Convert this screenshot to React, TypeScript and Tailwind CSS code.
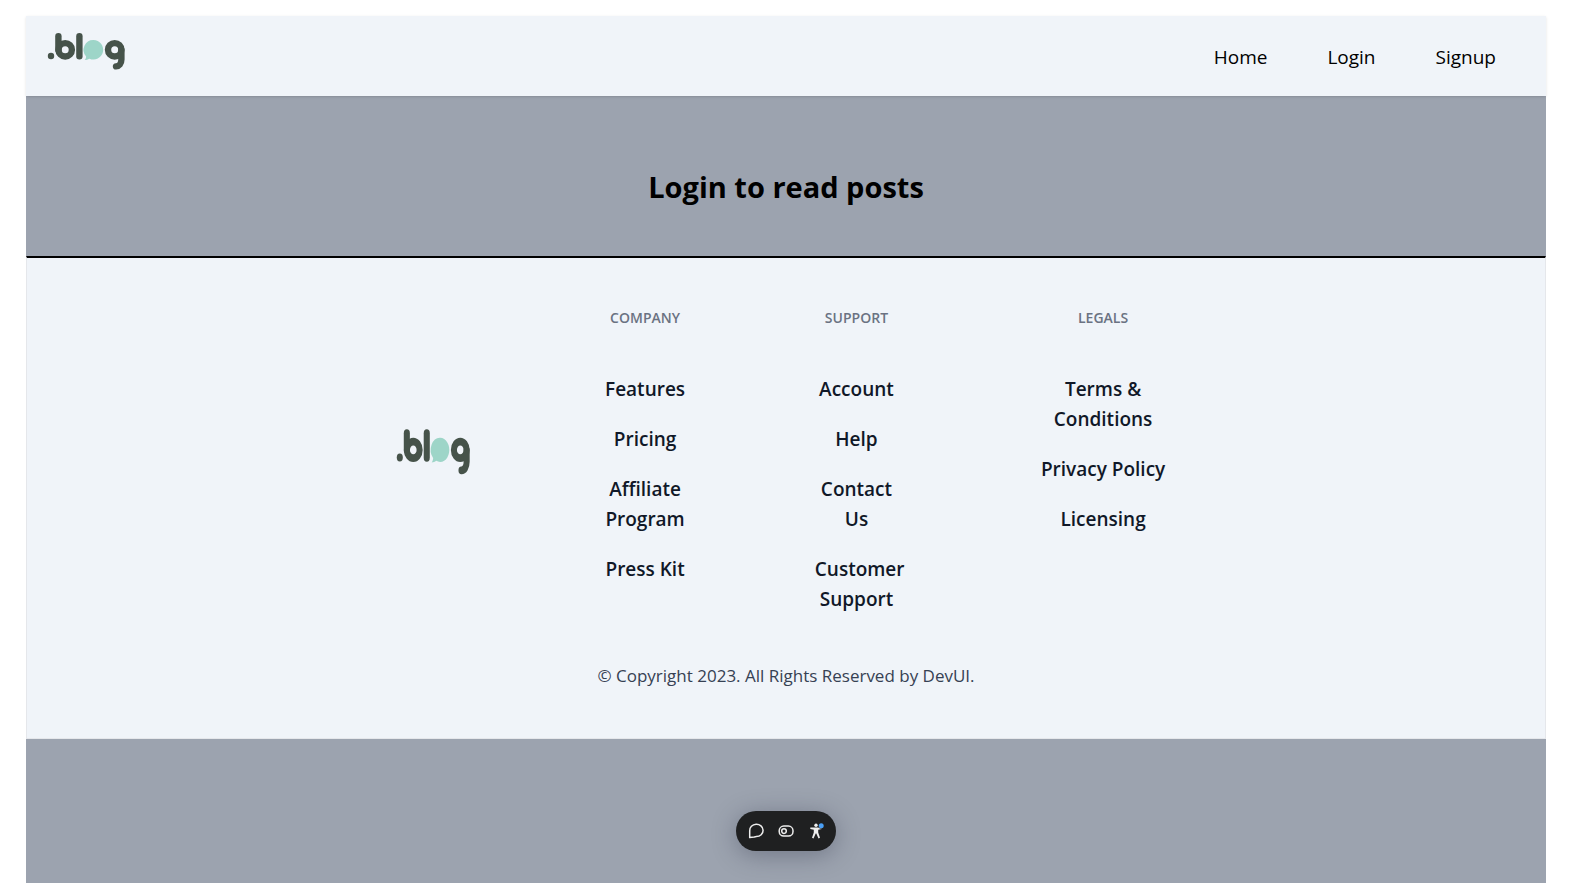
import type { ReactNode } from "react";

type LinkGroup = { title: string; links: string[] };

const navItems = ["Home", "Login", "Signup"];

const linkGroups: LinkGroup[] = [
  { title: "Company", links: ["Features", "Pricing", "Affiliate Program", "Press Kit"] },
  { title: "Support", links: ["Account", "Help", "Contact Us", "Customer Support"] },
  { title: "Legals", links: ["Terms & Conditions", "Privacy Policy", "Licensing"] },
];

function Logo({ className }: { className: string }) {
  return (
    <svg className={className} viewBox="47 32 79 39" preserveAspectRatio="none" role="img" aria-label=".blog">
      <circle cx="51" cy="56" r="3.2" fill="#46534a" />
      <g fill="none" stroke="#46534a" strokeWidth="6.4" strokeLinecap="round">
        <circle cx="65.2" cy="49.8" r="6.7" />
        <path d="M58.4 36.2V50" />
        <path d="M79.4 36.2V56.2" />
        <circle cx="114.7" cy="49.8" r="6.7" />
        <path d="M121.4 50V59.5C121.4 63.6 119 66.3 116 66.4" />
      </g>
      <path
        d="M93.6 40a9.7 9.8 0 1 1-4.2 18.7C87.9 59.6 86.3 60 84.6 60c1-1.1 1.5-2.2 1.5-3.6A9.7 9.8 0 0 1 93.6 40Z"
        fill="#9dd5c8"
      />
    </svg>
  );
}

function ToolButton({ label, children }: { label: string; children: ReactNode }) {
  return (
    <button type="button" aria-label={label} className="flex h-8 w-[30px] items-center justify-center">
      <svg className="size-4" viewBox="0 0 16 16" fill="none" stroke="#ededed" strokeWidth="1.5">
        {children}
      </svg>
    </button>
  );
}

function Toolbar() {
  return (
    <div className="pointer-events-none fixed inset-x-0 bottom-8 flex justify-center pr-2.5">
      <div className="pointer-events-auto flex h-10 items-center rounded-full bg-[#1f2021] px-[5px] shadow-[0_4px_24px_rgba(50,55,75,0.4)]">
        <ToolButton label="Comment">
          <path d="M1.7 14.6V7.8A6.7 6.2 0 1 1 8.4 13.6C7.6 13.6 6.9 13.8 6 14Z" strokeLinejoin="round" />
        </ToolButton>
        <ToolButton label="Feature flags">
          <rect x="1.2" y="3.1" width="13.8" height="10" rx="4.6" />
          <circle cx="6" cy="8.1" r="2.3" />
        </ToolButton>
        <ToolButton label="Accessibility">
          <circle cx="8" cy="2.2" r="1.7" fill="#ededed" stroke="none" />
          <path
            d="M2.3 4.6H13.7V6.1L10.2 6.8V9.5L12 14.8L10.5 15.4L8.3 10.5H7.7L5.5 15.4L4 14.8L5.8 9.5V6.8L2.3 6.1Z"
            fill="#ededed"
            stroke="none"
          />
          <circle cx="13.2" cy="2.8" r="3" fill="#1f2021" stroke="none" />
          <circle cx="13.2" cy="2.8" r="2.5" fill="#4a9ff5" stroke="none" />
        </ToolButton>
      </div>
    </div>
  );
}

export default function App() {
  return (
    <div className="flex min-h-screen flex-col bg-white pt-4 pr-9 pl-[26px] font-['Segoe_UI','Open_Sans',sans-serif]">
      <div className="flex-1 bg-[#9ca3af]">
        <header className="flex h-20 items-start justify-between bg-[#f0f4f9] py-4 pr-[26px] pl-[21px] shadow">
          <a href="#home">
            <Logo className="h-[39px] w-[79px]" />
          </a>
          <nav className="flex gap-3 self-center">
            {navItems.map((item) => (
              <a key={item} href={`#${item.toLowerCase()}`} className="px-6 pt-0.5 text-[19px] leading-[30px] text-black">
                {item}
              </a>
            ))}
          </nav>
        </header>

        <main className="pt-[71px] pb-[49px] text-center">
          <h1 className="text-[29px] leading-10 font-bold text-black">Login to read posts</h1>
        </main>

        <footer className="border border-t-2 border-gray-200 border-t-black bg-[#f0f4f9] pt-12 pb-12 text-center">
          <div className="mx-auto grid max-w-[916px] grid-cols-[minmax(0,3fr)_minmax(0,3fr)_minmax(0,3fr)_minmax(0,4fr)]">
            <a href="#home" className="self-center justify-self-center pb-4">
              <Logo className="h-12 w-[75px]" />
            </a>
            {linkGroups.map((group) => (
              <section key={group.title} className="px-16">
                <h2 className="mb-11 text-sm leading-6 font-semibold text-gray-500 uppercase">{group.title}</h2>
                <ul className="flex flex-col gap-5">
                  {group.links.map((link) => (
                    <li key={link} className="text-[19px] leading-[30px] font-semibold text-gray-900">
                      <a href="#">{link}</a>
                    </li>
                  ))}
                </ul>
              </section>
            ))}
          </div>
          <p className="mt-12 text-[17px] leading-7 text-gray-700">© Copyright 2023. All Rights Reserved by DevUI.</p>
        </footer>
      </div>
      <Toolbar />
    </div>
  );
}
